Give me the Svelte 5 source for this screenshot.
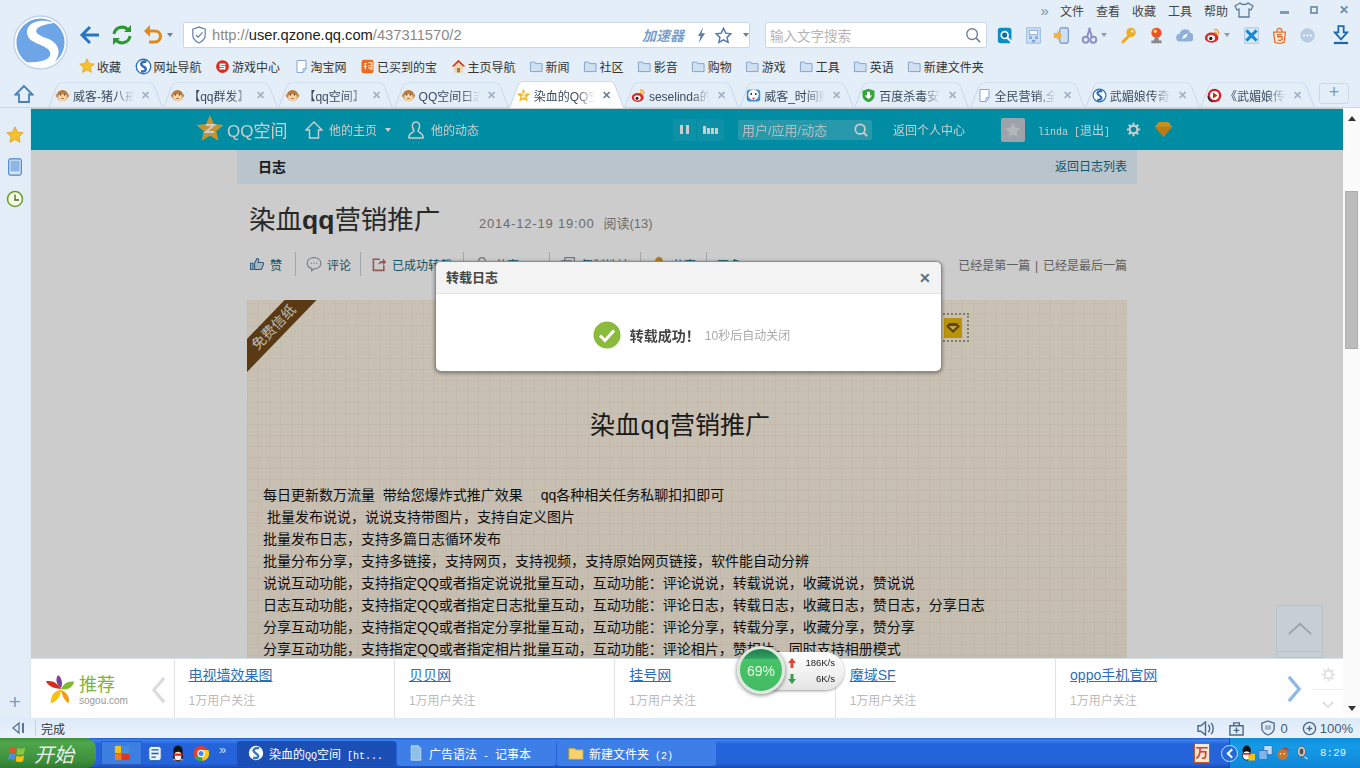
<script>
  const menus = ['文件', '查看', '收藏', '工具', '帮助'];
  const tools = [
    { k: 'qsearch' }, { k: 'calc' }, { k: 'phone' }, { k: 'scissors', c: true }, { k: 'key' },
    { k: 'stamp' }, { k: 'cloud' }, { k: 'weibo', c: true }, { k: 'tool' }, { k: 'html' }, { k: 'more' }
  ];
  const marks = [
    { i: 'star', t: '收藏' }, { i: 'sogou', t: '网址导航' }, { i: 'game', t: '游戏中心' },
    { i: 'doc', t: '淘宝网' }, { i: 'tao', t: '已买到的宝' }, { i: 'house', t: '主页导航' },
    { i: 'folder', t: '新闻' }, { i: 'folder', t: '社区' }, { i: 'folder', t: '影音' },
    { i: 'folder', t: '购物' }, { i: 'folder', t: '游戏' }, { i: 'folder', t: '工具' },
    { i: 'folder', t: '英语' }, { i: 'folder', t: '新建文件夹' }
  ];
  const tabs = [
    { i: 'monkey', t: '威客-猪八戒' }, { i: 'monkey', t: '【qq群发】' }, { i: 'monkey', t: '【qq空间】' },
    { i: 'monkey', t: 'QQ空间日志' }, { i: 'zstar', t: '染血的QQ空', active: true }, { i: 'weibo', t: 'seselinda的' },
    { i: 'sheep', t: '威客_时间财' }, { i: 'shield', t: '百度杀毒安' }, { i: 'doc', t: '全民营销,全' },
    { i: 'sogou', t: '武媚娘传奇' }, { i: 'play', t: '《武媚娘传' }
  ];
  const actions = [
    { i: 'thumb', t: '赞', w: 47 }, { i: 'bubble', t: '评论', w: 55 }, { i: 'share', t: '已成功转载', w: 93 },
    { i: 'person', t: '共享', w: 76 }, { i: 'copy', t: '复制地址', w: 81 }, { i: 'bell', t: '分享', w: 56 }, { i: 'none', t: '更多', w: 40 }
  ];
  const lines = [
    '每日更新数万流量  带给您爆炸式推广效果　 qq各种相关任务私聊扣扣即可',
    ' 批量发布说说，说说支持带图片，支持自定义图片',
    '批量发布日志，支持多篇日志循环发布',
    '批量分布分享，支持多链接，支持网页，支持视频，支持原始网页链接，软件能自动分辨',
    '说说互动功能，支持指定QQ或者指定说说批量互动，互动功能：评论说说，转载说说，收藏说说，赞说说',
    '日志互动功能，支持指定QQ或者指定日志批量互动，互动功能：评论日志，转载日志，收藏日志，赞日志，分享日志',
    '分享互动功能，支持指定QQ或者指定分享批量互动，互动功能：评论分享，转载分享，收藏分享，赞分享',
    '分享互动功能，支持指定QQ或者指定相片批量互动，互动功能：评论相片，赞相片，同时支持相册模式'
  ];
  const recs = ['电视墙效果图', '贝贝网', '挂号网', '魔域SF', 'oppo手机官网'];
</script>

{#snippet icon(k)}
  <svg class="ic" viewBox="0 0 20 20" aria-hidden="true">
    {#if k === 'star'}
      <path d="M10 1l2.700 5.800 6.300.8-4.600 4.300 1.200 6.200L10 15l-5.600 3.100 1.200-6.200L1 7.600l6.300-.8z" fill="#f5c22e" stroke="#d99a16" stroke-width=".8"/>
    {:else if k === 'zstar'}
      <path d="M10 1l2.700 5.800 6.300.8-4.600 4.300 1.200 6.200L10 15l-5.600 3.100 1.200-6.200L1 7.600l6.300-.8z" fill="#f2b92b"/>
      <path d="M7 7h6l-5 5h5" fill="none" stroke="#fff" stroke-width="1.600"/>
    {:else if k === 'sogou'}
      <circle cx="10" cy="10" r="8.500" fill="#fff" stroke="#2f6fb7" stroke-width="1.600"/>
      <path d="M13.500 4.500C9 3.500 6 6 8 8.500s5.500 2.500 4.500 5.500c-.6 1.600-3 2-5.500 1.500" fill="none" stroke="#2f6fb7" stroke-width="3"/>
    {:else if k === 'game'}
      <circle cx="10" cy="10" r="8.500" fill="#dc2b20"/>
      <path d="M14 7H7v3h6v3H6" fill="none" stroke="#fff" stroke-width="1.800"/>
    {:else if k === 'doc'}
      <path d="M4 2h12v11l-4 5H4z" fill="#fff" stroke="#7da5d6" stroke-width="1.300"/>
      <path d="M16 13h-4v5" fill="none" stroke="#7da5d6" stroke-width="1.300"/>
    {:else if k === 'tao'}
      <rect x="2" y="1" width="16" height="18" rx="3" fill="#ef6a1c"/>
      <path d="M6 6h3M5 10h4M7 6v8M11 5h5v9h-2M11 9h5M11 12h4" fill="none" stroke="#fff" stroke-width="1.300"/>
    {:else if k === 'house'}
      <path d="M10 1L1 10h3v8h12v-8h3z" fill="#e8d8b5"/>
      <path d="M10 1L1 10h3l6-6 6 6h3z" fill="#d63020"/>
      <rect x="8" y="12" width="4" height="6" fill="#b5772e"/>
    {:else if k === 'folder'}
      <path d="M2 4h6l1 2h9v11H2z" fill="#cfe0f3" stroke="#7f9cbe" stroke-width="1.200"/>
    {:else if k === 'monkey'}
      <circle cx="10" cy="10" r="7.500" fill="#b9793c"/>
      <circle cx="3" cy="10" r="2" fill="#c98d4d"/><circle cx="17" cy="10" r="2" fill="#c98d4d"/>
      <ellipse cx="10" cy="12.500" rx="6" ry="5" fill="#f5d4a8"/>
      <circle cx="7.500" cy="9" r="1" fill="#3a2412"/><circle cx="12.500" cy="9" r="1" fill="#3a2412"/>
      <path d="M8 14h4" stroke="#9a5a2a" stroke-width="1"/>
    {:else if k === 'weibo'}
      <ellipse cx="9" cy="12.500" rx="8" ry="6" fill="#d92b2b"/>
      <ellipse cx="8.500" cy="13" rx="4.500" ry="3.500" fill="#fff"/>
      <circle cx="8" cy="13.500" r="2" fill="#222"/>
      <path d="M12 3c3.500-.6 6 2 5 5.500M12 6c1.500-.3 3 .8 2.500 2.600" fill="none" stroke="#ef9a1f" stroke-width="1.500"/>
    {:else if k === 'sheep'}
      <rect x="1" y="2" width="18" height="16" rx="4" fill="#3c8ed6"/>
      <circle cx="10" cy="9" r="7" fill="#fff"/>
      <circle cx="7" cy="8" r="1.200" fill="#222"/><circle cx="13" cy="8" r="1.200" fill="#222"/>
      <path d="M8 13l2 3 2-3z" fill="#d33"/>
    {:else if k === 'shield'}
      <path d="M10 1l8 2.500V10c0 4.500-3.500 7.500-8 9-4.500-1.500-8-4.500-8-9V3.500z" fill="#35a63b"/>
      <path d="M8 5h4v5h3l-5 5-5-5h3z" fill="#fff"/>
    {:else if k === 'play'}
      <circle cx="10" cy="10" r="9" fill="#d81e1e"/>
      <circle cx="10" cy="10" r="6" fill="#fff"/>
      <path d="M8 6l6 4-6 4z" fill="#d81e1e"/>
      <path d="M1.500 11a8.500 8.500 0 0 0 6 7.500" fill="none" stroke="#222" stroke-width="2"/>
    {:else if k === 'qsearch'}
      <rect x="1" y="1" width="16" height="18" rx="3" fill="#0d8bc4"/>
      <circle cx="9" cy="9.500" r="4" fill="#0a6ea3" stroke="#fff" stroke-width="2"/>
      <path d="M12 12.500l6 6" stroke="#eaf6ff" stroke-width="2.500"/>
    {:else if k === 'calc'}
      <rect x="2" y="1" width="16" height="18" fill="#cfe0f4" stroke="#8fb3e0"/>
      <rect x="5" y="4" width="10" height="5" fill="#fff" stroke="#7ea3d4"/>
      <path d="M5 11h3v3H5zM12 11h3v3h-3zM8 15h4v3H8z" fill="#7ea3d4"/>
    {:else if k === 'phone'}
      <rect x="8" y="1" width="10" height="18" rx="2" fill="#cfe0f4" stroke="#6e93c4" stroke-width="1.300"/>
      <path d="M1 7h4V4l6 6-6 6v-3H1z" fill="#f2b23c"/>
    {:else if k === 'scissors'}
      <circle cx="5.500" cy="15" r="3.500" fill="none" stroke="#8d8fc6" stroke-width="2.200"/>
      <circle cx="14.500" cy="15" r="3.500" fill="none" stroke="#8d8fc6" stroke-width="2.200"/>
      <path d="M7 12L10.500 1M13 12L9.500 1" stroke="#8d8fc6" stroke-width="2.400"/>
    {:else if k === 'key'}
      <circle cx="13" cy="6.500" r="5.500" fill="#f0ae24"/>
      <circle cx="14.500" cy="5" r="1.400" fill="#e4effa"/>
      <path d="M9.500 9L2 16.500V19h3l1-2 2-1 4-5z" fill="#ecaa2c"/>
    {:else if k === 'stamp'}
      <circle cx="10" cy="7" r="6" fill="#e9522a"/>
      <circle cx="8.500" cy="5" r="2" fill="#f7d55a"/>
      <path d="M8 12h4l1 4h3v3H4v-3h3z" fill="#888"/>
    {:else if k === 'cloud'}
      <path d="M5 17a4.500 4.500 0 0 1-.6-9A6.500 6.500 0 0 1 17 7a5 5 0 0 1-1 10z" fill="#8fb0d8"/>
      <path d="M7 14l2-4 5-3-2 5z" fill="#fff"/>
    {:else if k === 'tool'}
      <rect x="2" y="1" width="16" height="18" fill="#dfe9f5" stroke="#a9bcd4"/>
      <path d="M4 4l12 12M16 4L4 16" stroke="#1c89cf" stroke-width="3.500"/>
    {:else if k === 'html'}
      <path d="M3 6h14l-1.500 12-5.500 1.500L4.500 18z" fill="#fdeee0" stroke="#ef6a2c" stroke-width="1.500"/>
      <path d="M7 6c0-6 6-6 6 0" fill="none" stroke="#ef6a2c" stroke-width="1.500"/>
      <path d="M13 9H8v2.500h5V15l-3 1-2-1" fill="none" stroke="#ef6a2c" stroke-width="1.600"/>
    {:else if k === 'more'}
      <circle cx="10" cy="10" r="8.500" fill="#b9cce4"/>
      <circle cx="6" cy="10" r="1.200" fill="#fff"/><circle cx="10" cy="10" r="1.200" fill="#fff"/><circle cx="14" cy="10" r="1.200" fill="#fff"/>
    {:else if k === 'thumb'}
      <path d="M2 9h3v8H2zM7 9l3-6c2 0 2.500 1.500 2 3l-.5 2H17c1 0 1.500 1 1 2l-2 6c-.3.700-1 1-2 1H7z" fill="#d7e4ef" stroke="#33719f" stroke-width="1.300"/>
    {:else if k === 'bubble'}
      <path d="M10 2c5 0 8.500 3 8.500 7s-3.500 7-8.500 7l-3 2.500V15.400C3.500 14.500 1.500 12 1.500 9c0-4 3.500-7 8.500-7z" fill="none" stroke="#95a4ab" stroke-width="1.500"/>
      <circle cx="6.500" cy="9" r=".9" fill="#95a4ab"/><circle cx="10" cy="9" r=".9" fill="#95a4ab"/><circle cx="13.500" cy="9" r=".9" fill="#95a4ab"/>
    {:else if k === 'share'}
      <path d="M11 4H3v14h13v-6" fill="none" stroke="#c26c6c" stroke-width="2"/>
      <path d="M9 11c0-3 3-5 6-5V3l4 4.500L15 12V9c-2.500 0-4.500.5-6 2z" fill="#c26c6c"/>
    {:else if k === 'person'}
      <circle cx="10" cy="6" r="4" fill="none" stroke="#8a9499" stroke-width="1.500"/>
      <path d="M3 18c0-5 3-7 7-7s7 2 7 7" fill="none" stroke="#8a9499" stroke-width="1.500"/>
    {:else if k === 'copy'}
      <rect x="6" y="2" width="12" height="12" fill="none" stroke="#8a9499" stroke-width="1.500"/>
      <rect x="2" y="6" width="12" height="12" fill="#cfd3d6" stroke="#8a9499" stroke-width="1.500"/>
    {:else if k === 'bell'}
      <path d="M10 1c4 0 5 4 5 7s2 5 3 7H2c1-2 3-4 3-7s1-7 5-7z" fill="#d9a030"/>
    {/if}
  </svg>
{/snippet}

<div class="app">
  <header class="chrome">
    <div class="head">
      <div class="logo-col">
        <svg class="logo" viewBox="0 0 56 56" aria-hidden="true">
          <circle cx="28" cy="28" r="27" fill="#fff" stroke="#c3d4ea" stroke-width="1.500"/>
          <circle cx="28" cy="28" r="24.500" fill="#6ea5e6"/>
          <path d="M42 8C25 2 11 10 15 21c3 9 22 9 23 18 .5 6-9 10-24 9 9 7 22 7 29-1 7-9 3-19-8-23-8-3-13-6-11-9 2-4 9-5 18-7z" fill="#fff"/>
        </svg>
      </div>
      <div class="head-main">
        <div class="menubar">
          <span class="chev">»</span>
          {#each menus as m}<span class="menu">{m}</span>{/each}
          <svg class="shirt" viewBox="0 0 20 16" aria-hidden="true"><path d="M6 1L1 4l2 4 2-1v8h10V7l2 1 2-4-5-3c-1 2-7 2-8 0z" fill="none" stroke="#5f7995" stroke-width="1.300"/></svg>
          <span class="winbtn min"></span>
          <span class="winbtn rest"></span>
          <span class="winbtn close">✕</span>
        </div>
        <div class="navrow">
          <svg class="nav back" viewBox="0 0 22 22" aria-hidden="true"><path d="M20 11H4M11 3l-8 8 8 8" fill="none" stroke="#2676c0" stroke-width="3"/></svg>
          <svg class="nav refresh" viewBox="0 0 22 22" aria-hidden="true"><path d="M3 10a8 8 0 0 1 14-4M19 12a8 8 0 0 1-14 4" fill="none" stroke="#2a9a2f" stroke-width="3"/><path d="M20 1v7h-7zM2 21v-7h7z" fill="#2a9a2f"/></svg>
          <svg class="nav undo" viewBox="0 0 22 22" aria-hidden="true"><path d="M4 7h9a5.500 5.500 0 0 1 0 11H7" fill="none" stroke="#e0891a" stroke-width="3"/><path d="M8 1L2 7l6 6z" fill="#e0891a"/></svg>
          <span class="caret"></span>
          <div class="urlbox">
            <svg class="urlshield" viewBox="0 0 18 20" aria-hidden="true"><path d="M9 1l7 2.500V10c0 4-3 7-7 9-4-2-7-5-7-9V3.500z" fill="none" stroke="#6f8db0" stroke-width="1.500"/><path d="M5.500 10l2.500 2.500L13 7" fill="none" stroke="#6f8db0" stroke-width="1.500"/></svg>
            <span class="url"><span class="dim">http://</span>user.qzone.qq.com<span class="dim">/437311570/2</span></span>
            <i class="accel">加速器</i>
            <svg class="bolt" viewBox="0 0 10 18" aria-hidden="true"><path d="M7 0L1 10h3l-2 8 7-11H5z" fill="#5d7fa6"/></svg>
            <svg class="urlstar" viewBox="0 0 20 20" aria-hidden="true"><path d="M10 1.500l2.600 5.700 6 .8-4.400 4.200 1.200 6L10 15.200l-5.400 3 1.200-6L1.400 8l6-.8z" fill="none" stroke="#4d78a8" stroke-width="1.700"/></svg>
            <span class="caret gray"></span>
          </div>
          <div class="searchbox">
            <span class="ph">输入文字搜索</span>
            <svg class="sico" viewBox="0 0 18 18" aria-hidden="true"><circle cx="8" cy="8" r="6" fill="none" stroke="#6f8396" stroke-width="1.600"/><path d="M12.500 12.500L17 17" stroke="#6f8396" stroke-width="1.800"/></svg>
          </div>
          <div class="tools">
            {#each tools as t}
              <span class="tool" class:wide={t.c}>{@render icon(t.k)}{#if t.c}<span class="tcaret"></span>{/if}</span>
            {/each}
          </div>
          <svg class="dl" viewBox="0 0 18 22" aria-hidden="true"><path d="M6 1h6v7h4l-7 8-7-8h4z" fill="none" stroke="#1d68ad" stroke-width="2"/><path d="M1 20h16" stroke="#1d68ad" stroke-width="2.500"/></svg>
        </div>
        <div class="marks">
          {#each marks as b}
            <span class="mark {b.i}">{@render icon(b.i)}{b.t}</span>
          {/each}
        </div>
      </div>
    </div>
    <div class="tabrow">
      <svg class="tabhome" viewBox="0 0 20 20" aria-hidden="true"><path d="M10 2L1.500 10.500H5V18h10v-7.500h3.500z" fill="none" stroke="#4a7fb5" stroke-width="1.800"/></svg>
      {#each tabs as t}
        <div class="tab" class:active={t.active}>
          {@render icon(t.i)}
          <span class="tabtext">{t.t}</span>
          <span class="tabx">✕</span>
        </div>
      {/each}
      <div class="newtab">+</div>
    </div>
  </header>

  <div class="body">
    <aside class="side">
      <span class="sb star">{@render icon('star')}</span>
      <svg class="sb" viewBox="0 0 16 20" aria-hidden="true"><rect x="1" y="1" width="14" height="18" rx="2" fill="#d7e6f7" stroke="#4a83c6" stroke-width="1.300"/><rect x="3" y="3" width="10" height="12" fill="#8db6e6"/></svg>
      <svg class="sb" viewBox="0 0 18 18" aria-hidden="true"><circle cx="9" cy="9" r="7.500" fill="#f6fae8" stroke="#6a9b2a" stroke-width="1.500"/><path d="M9 4.500V10h4" fill="none" stroke="#3d6a1a" stroke-width="1.300"/></svg>
      <span class="plus">+</span>
    </aside>

    <div class="center">
      <main class="view">
        <div class="qzbar">
          <div class="qzleft">
            <svg class="qzstar" viewBox="0 0 28 28" aria-hidden="true"><path d="M14 0l3.900 9 9.700.9-7.400 6.300 2.300 9.600-8.500-5.100-8.500 5.100 2.300-9.600L.4 9.900 10.100 9z" fill="#f3bb3d"/><path d="M10 10h8l-8 7h8" fill="none" stroke="#fff" stroke-width="2"/></svg>
            <span class="qzname">QQ空间</span>
            <svg class="qzi home" viewBox="0 0 18 18" aria-hidden="true"><path d="M9 1L1 9h3.500v8h9V9H17z" fill="none" stroke="#fff" stroke-width="1.500"/></svg>
            <span class="qzlink">他的主页</span>
            <span class="caret white"></span>
            <svg class="qzi person" viewBox="0 0 18 18" aria-hidden="true"><path d="M9 1c3 0 4 2.500 3.500 5S11 9 11 10c0 1 5 2 5 6v1H2v-1c0-4 5-5 5-6 0-1-1-1.500-1.500-4S6 1 9 1z" fill="none" stroke="#fff" stroke-width="1.500"/></svg>
            <span class="qzlink">他的动态</span>
          </div>
          <div class="qzright">
            <span class="qzbtn pause"><i></i><i></i></span>
            <span class="qzbtn bars"><i></i><i></i><i></i><i></i></span>
            <div class="qzsearch">
              <span>用户/应用/动态</span>
              <svg viewBox="0 0 16 16" aria-hidden="true"><circle cx="7" cy="7" r="5.500" fill="none" stroke="#fff" stroke-width="2"/><path d="M11 11l4 4" stroke="#fff" stroke-width="2.200"/></svg>
            </div>
            <span class="qzback">返回个人中心</span>
            <span class="avatar"><svg viewBox="0 0 20 20" aria-hidden="true"><path d="M10 2l2.500 5.300 5.800.8-4.200 4 1 5.800L10 15.100l-5.100 2.800 1-5.800-4.200-4 5.800-.8z" fill="#dfe5ea"/></svg></span>
            <span class="uname"><span class="lat">linda [</span>退出<span class="lat">]</span></span>
            <svg class="qzgear" viewBox="0 0 18 18" aria-hidden="true"><circle cx="9" cy="9" r="4.500" fill="none" stroke="#fff" stroke-width="2.500"/><path d="M9 1v3M9 14v3M1 9h3M14 9h3M3.300 3.300l2.100 2.100M12.600 12.600l2.100 2.100M3.300 14.700l2.100-2.100M12.600 5.400l2.100-2.100" stroke="#fff" stroke-width="2.500"/></svg>
            <svg class="qzgem" viewBox="0 0 20 18" aria-hidden="true"><path d="M5 1h10l4 5-9 11L1 6z" fill="#f5b52e"/><path d="M1 6h18L10 17z" fill="#e89a1c"/></svg>
          </div>
        </div>

        <div class="blog">
          <div class="crumb"><b>日志</b><span>返回日志列表</span></div>
          <div class="titlerow">
            <h1>染血<strong>qq</strong>营销推广</h1>
            <span class="meta"><span class="date">2014-12-19 19:00</span><span class="reads">阅读(13)</span></span>
          </div>
          <div class="actions">
            <div class="alist">
              {#each actions as a}
                <span class="act" style="width:{a.w}px">{#if a.i !== 'none'}{@render icon(a.i)}{/if}<span>{a.t}</span></span>
              {/each}
            </div>
            <span class="pager">已经是第一篇 | 已经是最后一篇</span>
          </div>
          <article class="paper">
            <div class="ribbon"><span>免费信纸</span></div>
            <div class="gold">
              <span><svg viewBox="0 0 14 12" aria-hidden="true"><path d="M3 1h8l3 3.500L7 11 0 4.500z" fill="#7a5a10"/><path d="M3 4h8L7 8z" fill="#f4d266"/></svg></span>
            </div>
            <h2>染血qq营销推广</h2>
            <div class="ptext">
              {#each lines as l}<p>{l}</p>{/each}
            </div>
          </article>
        </div>

        <div class="mask"></div>
        <div class="totop"><svg viewBox="0 0 28 16" aria-hidden="true"><path d="M2 14L14 3l12 11" fill="none" stroke="#9aa3a6" stroke-width="2"/></svg></div>

        <div class="modal">
          <div class="mhead"><b>转载日志</b><span class="mx">✕</span></div>
          <div class="mbody">
            <svg class="ok" viewBox="0 0 28 28" aria-hidden="true"><circle cx="14" cy="14" r="13.500" fill="#8cba3c"/><path d="M7 14.500l5 5L21 9.500" fill="none" stroke="#fff" stroke-width="3"/></svg>
            <b>转载成功！</b>
            <span>10秒后自动关闭</span>
          </div>
        </div>
      </main>

      <div class="recbar">
        <div class="reclogo">
          <svg viewBox="0 0 34 34" aria-hidden="true">
            <path d="M17 15C13 12 10 6 14 1c4 3 5 9 3 14z" fill="#7b3f98"/>
            <path d="M17 16C12 15 5 15 1 8c6-2 13 2 16 8z" fill="#dd2a1e"/>
            <path d="M17 16c2-5 7-9 14-8-1 6-8 10-14 8z" fill="#7dba2e"/>
            <path d="M17 17c-5 0-11 4-11 14 6-1 11-7 11-14z" fill="#f5c211"/>
            <path d="M17 17c1 5 3 11 8 14 2-6-2-12-8-14z" fill="#f29a1a"/>
          </svg>
          <div class="rl-t"><b>推荐</b><span>sogou.com</span></div>
          <svg class="rl-arrow" viewBox="0 0 16 30" aria-hidden="true"><path d="M14 2L3 15l11 13" fill="none" stroke="#dcdcdc" stroke-width="3.500"/></svg>
        </div>
        {#each recs as r}
          <div class="rec"><a href="#top">{r}</a><span>1万用户关注</span></div>
        {/each}
        <div class="recnext"><svg viewBox="0 0 16 30" aria-hidden="true"><path d="M2 2l11 13L2 28" fill="none" stroke="#8fb8e4" stroke-width="3.500"/></svg></div>
        <div class="recset">
          <div class="gear-cell"><svg viewBox="0 0 18 18" aria-hidden="true"><circle cx="9" cy="9" r="4.500" fill="none" stroke="#e3e3e3" stroke-width="2.500"/><path d="M9 1v3M9 14v3M1 9h3M14 9h3M3.300 3.300l2.100 2.100M12.600 12.600l2.100 2.100M3.300 14.700l2.100-2.100M12.600 5.400l2.100-2.100" stroke="#e3e3e3" stroke-width="2.500"/></svg></div>
          <div class="down-cell"><svg viewBox="0 0 16 10" aria-hidden="true"><path d="M2 2l6 6 6-6" fill="none" stroke="#dcdcdc" stroke-width="2"/></svg></div>
        </div>
      </div>
    </div>

    <div class="scroll">
      <span class="arrow up"></span>
      <div class="track"><div class="thumb"></div></div>
      <span class="arrow down"></span>
    </div>
  </div>

  <footer class="status">
    <svg class="st-toggle" viewBox="0 0 14 14" aria-hidden="true"><path d="M8 2L2 7l6 5z" fill="none" stroke="#5a7690" stroke-width="1.300"/><path d="M12 2v10" stroke="#5a7690" stroke-width="2"/></svg>
    <span class="st-sep"></span>
    <span class="st-text">完成</span>
    <div class="st-right">
      <svg viewBox="0 0 18 16" aria-hidden="true"><path d="M1 5h3l5-4v14l-5-4H1z" fill="none" stroke="#4a6a8a" stroke-width="1.500"/><path d="M12 4c2 2 2 6 0 8M15 2c3 3 3 9 0 12" fill="none" stroke="#4a6a8a" stroke-width="1.500"/></svg>
      <svg viewBox="0 0 16 16" aria-hidden="true"><path d="M1 5h14v10H1zM5 5V2h6v3M8 7v6M5 10h6" fill="none" stroke="#4a6a8a" stroke-width="1.500"/></svg>
      <span class="st-ad"><svg viewBox="0 0 16 18" aria-hidden="true"><path d="M8 1l7 2.500V9c0 4-3 6.500-7 8-4-1.500-7-4-7-8V3.500z" fill="none" stroke="#4a6a8a" stroke-width="1.500"/><path d="M4.500 6h7v5h-7z" fill="#9db2c7"/></svg>0</span>
      <span class="st-zoom"><svg viewBox="0 0 16 16" aria-hidden="true"><circle cx="8" cy="8" r="6.500" fill="none" stroke="#4a6a8a" stroke-width="1.500"/><path d="M8 5v6M5 8h6" stroke="#4a6a8a" stroke-width="1.500"/></svg>100%</span>
    </div>
  </footer>

  <nav class="taskbar">
    <div class="start">
      <svg viewBox="0 0 20 20" aria-hidden="true"><path d="M2 4c2-1.500 4.500-1.500 7 0l-1 6c-2.500-1.500-5-1.500-7 0z" fill="#e5532a"/><path d="M10 4c2.500 1.500 5 1.500 8-.5l-1 6.500c-3 2-5.500 2-8 .5z" fill="#8cc63f"/><path d="M1 11c2-1.500 4.500-1.500 7 0l-1 6c-2.500-1.500-5-1.500-7 0z" fill="#4b8fe0"/><path d="M9 12c2.500 1.500 5 1.500 8-.5l-1 6c-3 2-5.500 2-8 .5z" fill="#f5c211"/></svg>
      <i>开始</i>
    </div>
    <div class="quick">
      <span class="qactive"><svg viewBox="0 0 18 20" aria-hidden="true"><path d="M1 2h7v8H1z" fill="#f2c118"/><path d="M9 2h8v8H9z" fill="#3f8fe0"/><path d="M1 11h7v7H1z" fill="#f07a1c"/><path d="M9 11h8v7H9z" fill="#d8362a"/></svg></span>
      <svg viewBox="0 0 18 18" aria-hidden="true"><rect x="2" y="1" width="14" height="16" rx="3" fill="#e8f2fb" stroke="#1e5fa8"/><path d="M5 5h8M5 9h8M5 13h5" stroke="#1e5fa8" stroke-width="1.500"/></svg>
      <svg viewBox="0 0 18 20" aria-hidden="true"><ellipse cx="9" cy="7" rx="5.500" ry="6.500" fill="#111"/><ellipse cx="9" cy="13" rx="6" ry="6" fill="#111"/><ellipse cx="9" cy="13" rx="4" ry="5" fill="#fff"/><path d="M5 9h8l-4 2.500z" fill="#f5a511"/><path d="M2 18h6l-3-2zM10 18h6l-3-2z" fill="#f5a511"/><path d="M3.500 10.500h11l-.5 2h-10z" fill="#d8261e"/></svg>
      <svg viewBox="0 0 18 18" aria-hidden="true"><circle cx="9" cy="9" r="8.500" fill="#e43e2b"/><path d="M9 9L1.700 13.500A8.500 8.500 0 0 0 11 17.300z" fill="#3aa648"/><path d="M9 9l2 8.300A8.500 8.500 0 0 0 17.300 5H9z" fill="#f8c91c"/><circle cx="9" cy="9" r="3.500" fill="#4285f4" stroke="#fff" stroke-width="1.300"/></svg>
      <span class="qmore">»</span>
    </div>
    <div class="task active"><svg viewBox="0 0 20 20" aria-hidden="true"><circle cx="10" cy="10" r="9" fill="#fff"/><path d="M14 4C9 3 5 6 8 9s6 3 4.500 6c-1 1.500-3.500 1.500-6 1" fill="none" stroke="#3677c7" stroke-width="3"/></svg><span>染血的<span class="lat">QQ</span>空间<span class="lat">{' [ht...'}</span></span></div>
    <div class="task"><svg viewBox="0 0 16 20" aria-hidden="true"><path d="M2 1h9l3 3v15H2z" fill="#8ec0e8" stroke="#cfe2f3"/></svg><span>广告语法<span class="lat">{' - '}</span>记事本</span></div>
    <div class="task"><svg viewBox="0 0 20 18" aria-hidden="true"><path d="M1 3h7l2 2h9v12H1z" fill="#f5d26b" stroke="#b98f2a"/></svg><span>新建文件夹<span class="lat">{' (2)'}</span></span></div>
    <div class="tb-fill"><span class="wan">万</span></div>
    <div class="tray">
      <span class="tray-chev"></span>
      <svg viewBox="0 0 18 20" aria-hidden="true"><ellipse cx="8" cy="7" rx="5" ry="6" fill="#111"/><ellipse cx="8" cy="13" rx="5" ry="5.500" fill="#fff" stroke="#111"/><path d="M10 11h8v8h-8z" fill="#f5c211"/><path d="M3 10h10v2H3z" fill="#d8261e"/></svg>
      <svg viewBox="0 0 18 20" aria-hidden="true"><rect x="7" y="1" width="10" height="11" fill="#bcdcf5" stroke="#2f6fb7"/><rect x="1" y="7" width="10" height="11" fill="#7cb6ea" stroke="#2f6fb7"/></svg>
      <svg viewBox="0 0 20 20" aria-hidden="true"><circle cx="9" cy="12" r="7" fill="#c8742a"/><path d="M8 5c2-4 9-3 10 2-3-1.500-7-1-10-2z" fill="#cf3a2a"/><circle cx="6" cy="11" r="1" fill="#fff"/><circle cx="11" cy="11" r="1" fill="#fff"/></svg>
      <svg viewBox="0 0 20 20" aria-hidden="true"><ellipse cx="10" cy="8" rx="5.500" ry="7" fill="#c9c9c9" stroke="#555"/><ellipse cx="10" cy="8" rx="2.500" ry="4" fill="#555"/><path d="M14 15l4 3" stroke="#ddd" stroke-width="1.500"/></svg>
      <span class="clock">8:29</span>
    </div>
  </nav>

  <div class="speed">
    <div class="ball"><span>69%</span></div>
    <div class="rates">
      <div><svg viewBox="0 0 8 10" aria-hidden="true"><path d="M4 0l4 5H5.500v5h-3V5H0z" fill="#d84a35"/></svg><span>186K/s</span></div>
      <div><svg viewBox="0 0 8 10" aria-hidden="true"><path d="M4 10L0 5h2.500V0h3v5H8z" fill="#3d9a4e"/></svg><span>6K/s</span></div>
    </div>
  </div>
</div>

<style>
  :global(body) { margin: 0; overflow: hidden; }
  .app {
    position: relative; width: 1360px; height: 768px; overflow: hidden;
    display: flex; flex-direction: column; background: #e3edf8; color: #333;
    font-family: "Liberation Sans", "Noto Sans CJK SC", sans-serif; font-size: 12px;
  }
  p, h1, h2 { margin: 0; font-weight: normal; }
  svg { display: block; flex: none; }
  .ic { width: 16px; height: 16px; }
  .lat { font-family: "Liberation Mono", monospace; font-size: 10px; white-space: pre; }

  .chrome { height: 108px; flex: none; display: flex; flex-direction: column; background: #e4eef9; }
  .head { display: flex; height: 80px; }
  .logo-col { width: 79px; flex: none; padding: 15px 0 0 13px; box-sizing: border-box; }
  .logo { width: 55px; height: 55px; }
  .head-main { flex: 1; display: flex; flex-direction: column; min-width: 0; }
  .menubar { height: 20px; display: flex; align-items: center; justify-content: flex-end; color: #444; }
  .chev { font-size: 15px; color: #7c8fa3; margin-right: 11px; line-height: 1; }
  .menu { margin-right: 12px; }
  .shirt { width: 20px; height: 16px; margin: 0 16px 0 -6px; }
  .winbtn { width: 29px; display: flex; justify-content: center; align-items: center; color: #6d8aa8; font-size: 12px; font-weight: bold; }
  .winbtn.min::before { content: ''; width: 9px; height: 3px; background: #7f98b3; margin-top: 4px; }
  .winbtn.rest::before { content: ''; width: 8px; height: 8px; border: 2px solid #7f98b3; box-sizing: border-box; }
  .winbtn.close { width: 32px; }

  .navrow { height: 26px; margin-top: 2px; display: flex; align-items: center; }
  .nav { width: 22px; height: 22px; }
  .refresh { margin-left: 10px; }
  .undo { margin-left: 9px; }
  .caret { width: 0; height: 0; border: 3px solid transparent; border-top: 4px solid #6d8099; border-bottom: 0; margin-left: 3px; }
  .urlbox {
    width: 567px; height: 26px; box-sizing: border-box; margin-left: 10px; display: flex; align-items: center;
    background: #fff; border: 1px solid #c8d6e6; border-radius: 2px; padding: 0 0 0 6px;
  }
  .urlshield { width: 16px; height: 18px; margin-left: 1px; }
  .url { margin-left: 5px; font-size: 14.700px; color: #222; flex: 1; font-family: "Liberation Sans", sans-serif; }
  .url .dim { color: #8a8a8a; }
  .accel { color: #7ba1cb; font-size: 14px; font-weight: bold; margin-right: 13px; }
  .bolt { width: 9px; height: 16px; margin-right: 9px; }
  .urlstar { width: 17px; height: 17px; margin-right: 11px; }
  .caret.gray { margin: 0; }
  .searchbox {
    width: 222px; height: 26px; box-sizing: border-box; margin-left: 15px; display: flex; align-items: center; justify-content: space-between;
    background: #fff; border: 1px solid #c8d6e6; border-radius: 2px; padding: 0 5px 0 4px;
    color: #b5b5b5; font-size: 13.500px;
  }
  .sico { width: 16px; height: 16px; }
  .tools { display: flex; margin-left: 10px; align-items: center; }
  .tool { width: 28px; height: 22px; display: flex; align-items: center; position: relative; }
  .tool.wide { width: 39px; }
  .tool .ic { width: 17px; height: 17px; }
  .tcaret { width: 0; height: 0; border: 3px solid transparent; border-top: 4px solid #8a9bb0; border-bottom: 0; margin-left: 3px; }
  .dl { width: 16px; height: 20px; margin-left: 6px; }

  .marks { display: flex; gap: 13.500px; margin-top: 8px; height: 20px; align-items: center; color: #333; white-space: nowrap; }
  .mark { display: flex; align-items: center; gap: 2px; }
  .mark .ic { width: 15px; height: 15px; }
  .mark.star .ic { width: 16px; height: 16px; }
  .mark.sogou .ic { width: 17px; height: 17px; }
  .mark.folder .ic { width: 14.500px; }

  .tabrow { height: 28px; display: flex; align-items: flex-end; padding-left: 14px; box-shadow: inset 0 -1px 0 #c4d6e8; }
  .tabhome { width: 20px; height: 20px; margin: 0 14px 4px 0; }
  .tab {
    position: relative; isolation: isolate; width: 115.200px; height: 26px; flex: none; box-sizing: border-box;
    display: flex; align-items: center; padding: 0 13px 0 7px; color: #3b4b5c; gap: 3px;
  }
  .tab::before {
    content: ''; position: absolute; left: 0; right: 0; bottom: 0; height: 32px; z-index: -1; box-sizing: border-box;
    border: 1px solid #c4d5e8; border-bottom: 0; border-radius: 6px 6px 0 0;
    transform: perspective(40px) rotateX(15deg); transform-origin: 50% 100%;
  }
  .tab.active { z-index: 1; }
  .tab.active::before { background: #fff; height: 34px; }
  .tab .ic { width: 15px; height: 15px; }
  .tabtext {
    flex: 1; min-width: 0; overflow: hidden; white-space: nowrap;
    -webkit-mask-image: linear-gradient(90deg, #000 70%, transparent);
    mask-image: linear-gradient(90deg, #000 70%, transparent);
  }
  .tabx { font-size: 11px; color: #9db0c4; font-weight: bold; margin-left: 4px; }
  .tab.active .tabx { color: #6a7f95; }
  .newtab { width: 28px; height: 19px; margin: 0 0 4px 4px; border: 1px solid #c9d9ea; border-radius: 3px; color: #7f98b3; font-size: 18px; line-height: 17px; text-align: center; }

  .body { height: 610px; flex: none; display: flex; }
  .side { width: 31px; flex: none; display: flex; flex-direction: column; align-items: center; padding-top: 18px; box-sizing: border-box; gap: 14px; border-right: 1px solid #d9e5f1; }
  .sb { width: 18px; height: 18px; display: block; }
  .sb .ic { width: 18px; height: 18px; }
  .plus { margin-top: auto; margin-bottom: 6px; color: #7a9cc0; font-size: 21px; line-height: 20px; }

  .center { flex: 1; min-width: 0; display: flex; flex-direction: column; }
  .view { position: relative; height: 550px; overflow: hidden; background: #fff; }
  .mask { position: absolute; inset: 0; background: rgba(0,0,0,.2); }

  .qzbar { height: 41px; background: #00afcc; margin-top: 1px; display: flex; justify-content: space-between; color: #fff; }
  .qzleft { display: flex; align-items: center; padding-left: 165px; }
  .qzstar { width: 28px; height: 28px; margin-top: -1px; }
  .qzname { font-size: 17px; margin-left: 3px; color: #fff; width: 60px; white-space: nowrap; }
  .qzi { width: 18px; height: 18px; }
  .qzi.home { margin-left: 18px; }
  .qzlink { margin-left: 6px; }
  .caret.white { border-top-color: #fff; margin-left: 8px; }
  .qzi.person { margin-left: 16px; }
  .qzright { display: flex; align-items: center; padding-right: 170px; }
  .qzbtn { height: 22px; display: flex; align-items: center; justify-content: center; background: rgba(255,255,255,.07); gap: 2px; }
  .qzbtn i { display: block; background: #fff; }
  .pause { width: 23px; gap: 3px; }
  .pause i { width: 3px; height: 9px; }
  .bars { width: 27px; margin-left: 1px; align-items: flex-end; padding-bottom: 7px; box-sizing: border-box; gap: 1px; }
  .bars i { width: 3px; height: 6px; }
  .bars i:first-child { height: 8px; }
  .qzsearch { width: 134px; height: 20px; margin-left: 14px; background: rgba(255,255,255,.2); border-radius: 2px; display: flex; align-items: center; justify-content: space-between; padding: 0 4px; box-sizing: border-box; color: #d7eef3; font-size: 13px; }
  .qzsearch svg { width: 14px; height: 14px; }
  .qzback { margin-left: 21px; width: 108px; font-size: 12px; white-space: nowrap; }
  .avatar { width: 24px; height: 24px; background: #c6ccd6; border-radius: 2px; display: flex; align-items: center; justify-content: center; }
  .avatar svg { width: 18px; height: 18px; }
  .uname { margin-left: 13px; width: 88px; white-space: nowrap; }
  .qzgear { width: 15px; height: 15px; }
  .qzgem { width: 19px; height: 17px; margin-left: 13px; }

  .blog { width: 900px; margin: 0 auto; position: relative; }
  .crumb { height: 34px; background: #e9f6ff; display: flex; align-items: center; justify-content: space-between; padding: 0 10px 3px 21px; box-sizing: border-box; }
  .crumb b { font-size: 14px; color: #222; }
  .crumb span { color: #0c6c87; }
  .titlerow { height: 71px; display: flex; align-items: center; padding: 0 0 4px 12px; box-sizing: border-box; }
  h1 { font-size: 26.500px; color: #333; width: 230px; font-family: "Noto Sans CJK SC", sans-serif; white-space: nowrap; }
  h1 strong { font-family: "Liberation Sans", sans-serif; font-weight: bold; }
  .meta { color: #888; font-size: 13px; line-height: 18px; margin-top: 12px; white-space: nowrap; display: flex; align-items: baseline; }
  .date { letter-spacing: .8px; }
  .reads { margin-left: 9px; }
  .actions { height: 30px; display: flex; align-items: center; justify-content: space-between; padding: 0 10px 2px 12px; margin-top: -5px; box-sizing: border-box; }
  .alist { display: flex; align-items: center; }
  .act { display: flex; align-items: center; gap: 5px; margin-right: 10px; height: 24px; box-sizing: border-box; border-right: 1px solid #c9d1d5; color: #0f6b86; white-space: nowrap; }
  .act:last-child { border: 0; }
  .pager { color: #777; word-spacing: 1.500px; }
  .paper {
    position: relative; margin: 20px 10px 0; height: 400px; color: #111;
    background-color: #fcf0e0;
    background-image:
      repeating-linear-gradient(0deg, rgba(150,120,90,.05) 0 1px, transparent 1px 11px),
      repeating-linear-gradient(90deg, rgba(150,120,90,.05) 0 1px, transparent 1px 11px),
      linear-gradient(#fdf2e2, #f6ecdb);
    padding: 110px 0 0 16px; box-sizing: border-box;
  }
  .ribbon { position: absolute; left: 0; top: 0; width: 72px; height: 72px; overflow: hidden; }
  .ribbon span {
    position: absolute; left: -28px; top: 16px; width: 110px; height: 23px; line-height: 23px; text-align: center;
    background: #70491a; color: #efe9df; transform: rotate(-46deg); font-size: 14px;
  }
  .gold { position: absolute; left: 689px; top: 13px; width: 33px; height: 29px; box-sizing: border-box; border: 2px dotted #a39a80; display: flex; align-items: center; justify-content: center; }
  .gold span { width: 18px; height: 20px; background: #e8b90d; display: flex; align-items: center; justify-content: center; }
  .gold svg { width: 14px; height: 12px; }
  h2 { font-size: 25px; text-align: center; line-height: 36px; margin-left: -30px; font-family: "Liberation Mono", "Noto Sans CJK SC", monospace; color: #222; }
  .ptext { margin-top: 38px; font-size: 14px; line-height: 22px; white-space: pre-wrap; }

  .totop { position: absolute; left: 1245px; top: 497px; width: 47px; height: 53px; box-sizing: border-box; border: 1px solid #b7c4c9; background: #c6d0d4; display: flex; justify-content: center; padding-top: 15px; }
  .totop::after { content: ''; position: absolute; left: 0; right: 0; top: 45px; height: 1px; background: #b7c4c9; }
  .totop svg { width: 26px; height: 15px; }

  .modal { position: absolute; left: 405px; top: 154px; width: 505px; height: 109px; background: #fff; border-radius: 5px; overflow: hidden; box-shadow: 0 0 0 1px #8b8b8b, 0 1px 4px 1px rgba(0,0,0,.45); }
  .mhead { height: 31px; background: #f3f3f3; border-bottom: 1px solid #e4e4e4; display: flex; align-items: center; justify-content: space-between; padding: 0 10px; color: #444; }
  .mhead b { font-size: 13px; margin-top: -2px; }
  .mx { font-size: 14px; color: #5b6f82; font-weight: bold; }
  .mbody { height: 73px; display: flex; align-items: center; justify-content: center; padding: 4px 0 0 6px; }
  .ok { width: 28px; height: 28px; margin-right: 9px; }
  .mbody b { font-size: 14px; color: #444; }
  .mbody span { color: #aaa; font-size: 12px; margin-left: 5px; }

  .recbar { height: 60px; flex: none; background: #fff; display: flex; border-top: 1px solid #d5dfe8; box-sizing: border-box; }
  .reclogo { width: 143.500px; flex: none; display: flex; align-items: center; padding: 3px 8px 0 14px; box-sizing: border-box; border-right: 1px solid #e2e2e2; }
  .reclogo > svg:first-child { width: 32px; height: 32px; }
  .rl-t { display: flex; flex-direction: column; margin-left: 2px; }
  .rl-t b { font-size: 18px; font-weight: normal; color: #7eb339; line-height: 20px; }
  .rl-t span { font-size: 10px; color: #999; line-height: 11px; }
  .rl-arrow { width: 15px; height: 28px; margin-left: auto; }
  .rec { width: 220.400px; flex: none; box-sizing: border-box; padding: 6px 0 0 14px; border-right: 1px solid #e2e2e2; display: flex; flex-direction: column; }
  .rec a { color: #2d6fb5; font-size: 14px; line-height: 20px; }
  .rec span { color: #bbb; margin-top: 8px; line-height: 16px; }
  .rec:nth-of-type(n+6) { border-right: 0; }
  .recnext { width: 38px; flex: none; display: flex; align-items: center; justify-content: center; margin-left: -1px; padding-top: 1px; }
  .recnext svg { width: 15px; height: 28px; }
  .recset { flex: 1; display: flex; flex-direction: column; }
  .gear-cell { height: 30px; display: flex; align-items: center; justify-content: center; border-bottom: 1px solid #eee; }
  .gear-cell svg { width: 15px; height: 15px; }
  .down-cell { flex: 1; display: flex; align-items: center; justify-content: center; }
  .down-cell svg { width: 14px; height: 9px; }

  .scroll { width: 17px; flex: none; background: #fbfbfb; display: flex; flex-direction: column; align-items: center; }
  .arrow { width: 0; height: 0; border: 4px solid transparent; flex: none; }
  .arrow.up { border-bottom: 5px solid #333; border-top: 0; margin-top: 8px; }
  .arrow.down { border-top: 5px solid #333; border-bottom: 0; margin-bottom: 7px; }
  .track { flex: 1; width: 100%; padding-top: 70px; box-sizing: border-box; }
  .thumb { width: 13px; height: 158px; margin: 0 auto; background: #bcbcbc; border: 1px solid #aeaeae; box-sizing: border-box; }

  .status { height: 20px; flex: none; display: flex; align-items: center; background: linear-gradient(#ddeafa, #eaf2fb); color: #333; }
  .st-toggle { width: 14px; height: 14px; margin-left: 11px; }
  .st-sep { width: 1px; height: 16px; background: #c5d4e4; margin: 0 5px 0 10px; }
  .st-right { margin-left: auto; display: flex; align-items: center; color: #3f5b78; font-size: 13px; padding-right: 7px; }
  .st-right > svg { width: 17px; height: 15px; }
  .st-right > svg + svg { margin-left: 15px; width: 15px; }
  .st-ad { display: flex; align-items: center; gap: 6px; margin-left: 17px; }
  .st-ad svg { width: 14px; height: 16px; }
  .st-zoom { display: flex; align-items: center; gap: 3px; margin-left: 14px; }
  .st-zoom svg { width: 15px; height: 15px; }

  .taskbar { height: 30px; flex: none; display: flex; align-items: center; background: linear-gradient(#1f5fd6 0, #3b82ec 8%, #2463da 20%, #2463da 85%, #1a49ad 100%); color: #fff; }
  .start { width: 96px; height: 30px; flex: none; box-sizing: border-box; padding-left: 8px; display: flex; align-items: center; gap: 7px; background: linear-gradient(#3c8f3c, #4fa64a 15%, #3d903d 75%, #2f7a2f); border-radius: 0 10px 10px 0; font-size: 20px; color: #eee; }
  .start svg { width: 19px; height: 19px; }
  .quick { display: flex; align-items: center; width: 141px; flex: none; padding-left: 5px; gap: 7px; box-sizing: border-box; }
  .qactive { width: 41px; height: 24px; background: #3d7fe0; border: 1px solid #2a5cb8; box-sizing: border-box; display: flex; justify-content: center; align-items: center; margin-right: -2px; }
  .qactive svg { width: 16px; height: 18px; }
  .quick > svg { width: 16px; height: 17px; }
  .qmore { font-size: 13px; margin: -8px 0 0 3px; color: #cfe0f8; }
  .task { width: 159px; height: 25px; flex: none; margin-right: 1px; display: flex; align-items: center; padding-left: 11px; box-sizing: border-box; background: #3d7fe6; border-radius: 3px; gap: 5px; white-space: pre; font-size: 12px; }
  .task.active { background: #1c4fb5; }
  .task svg { width: 16px; height: 16px; }
  .tb-fill { flex: 1; display: flex; justify-content: flex-end; padding-right: 19px; }
  .wan { width: 16px; height: 20px; background: #f3e7d8; border: 1px solid #c0562a; box-sizing: border-box; color: #d8442a; font-size: 13px; font-weight: bold; line-height: 18px; text-align: center; overflow: hidden; }
  .tray { width: 131px; height: 30px; flex: none; box-sizing: border-box; background: linear-gradient(#0f8fdf, #169be6 30%, #0e86d8); border-left: 1px solid #0c4fa8; display: flex; align-items: center; gap: 3px; }
  .tray svg { width: 15px; height: 18px; }
  .tray-chev { width: 17px; height: 17px; border-radius: 50%; background: #2469d8; border: 1px solid #cfe4f8; box-sizing: border-box; margin: 0 -1px 0 -9px; position: relative; flex: none; }
  .tray-chev::after { content: ''; position: absolute; left: 6px; top: 4px; width: 5px; height: 5px; border-left: 2px solid #fff; border-bottom: 2px solid #fff; transform: rotate(45deg); }
  .clock { margin-left: 8px; font-family: "Liberation Mono", monospace; font-size: 10.500px; letter-spacing: .3px; color: #eaf4ff; }

  .speed { position: absolute; left: 737px; top: 646px; width: 107px; height: 48px; }
  .ball { position: absolute; left: 0; top: 0; width: 48px; height: 48px; box-sizing: border-box; border-radius: 50%; border: 3px solid #dfe8df; background: linear-gradient(#1d7f4f 0, #2f9f60 22%, #47c268 24%, #43bb64); box-shadow: 0 1px 4px rgba(0,0,0,.55); display: flex; align-items: center; justify-content: center; color: #e4f7e4; font-size: 14px; padding-top: 1px; z-index: 1; }
  .rates { position: absolute; left: 24px; top: 6px; width: 83px; height: 38px; border-radius: 0 19px 19px 0; box-sizing: border-box; background: linear-gradient(#fff, #e5e5e5); box-shadow: 0 1px 3px rgba(0,0,0,.4); padding: 3px 9px 0 27px; color: #222; font-size: 9.500px; }
  .rates div { display: flex; justify-content: space-between; align-items: center; line-height: 16px; }
  .rates svg { width: 8px; height: 10px; }
</style>
